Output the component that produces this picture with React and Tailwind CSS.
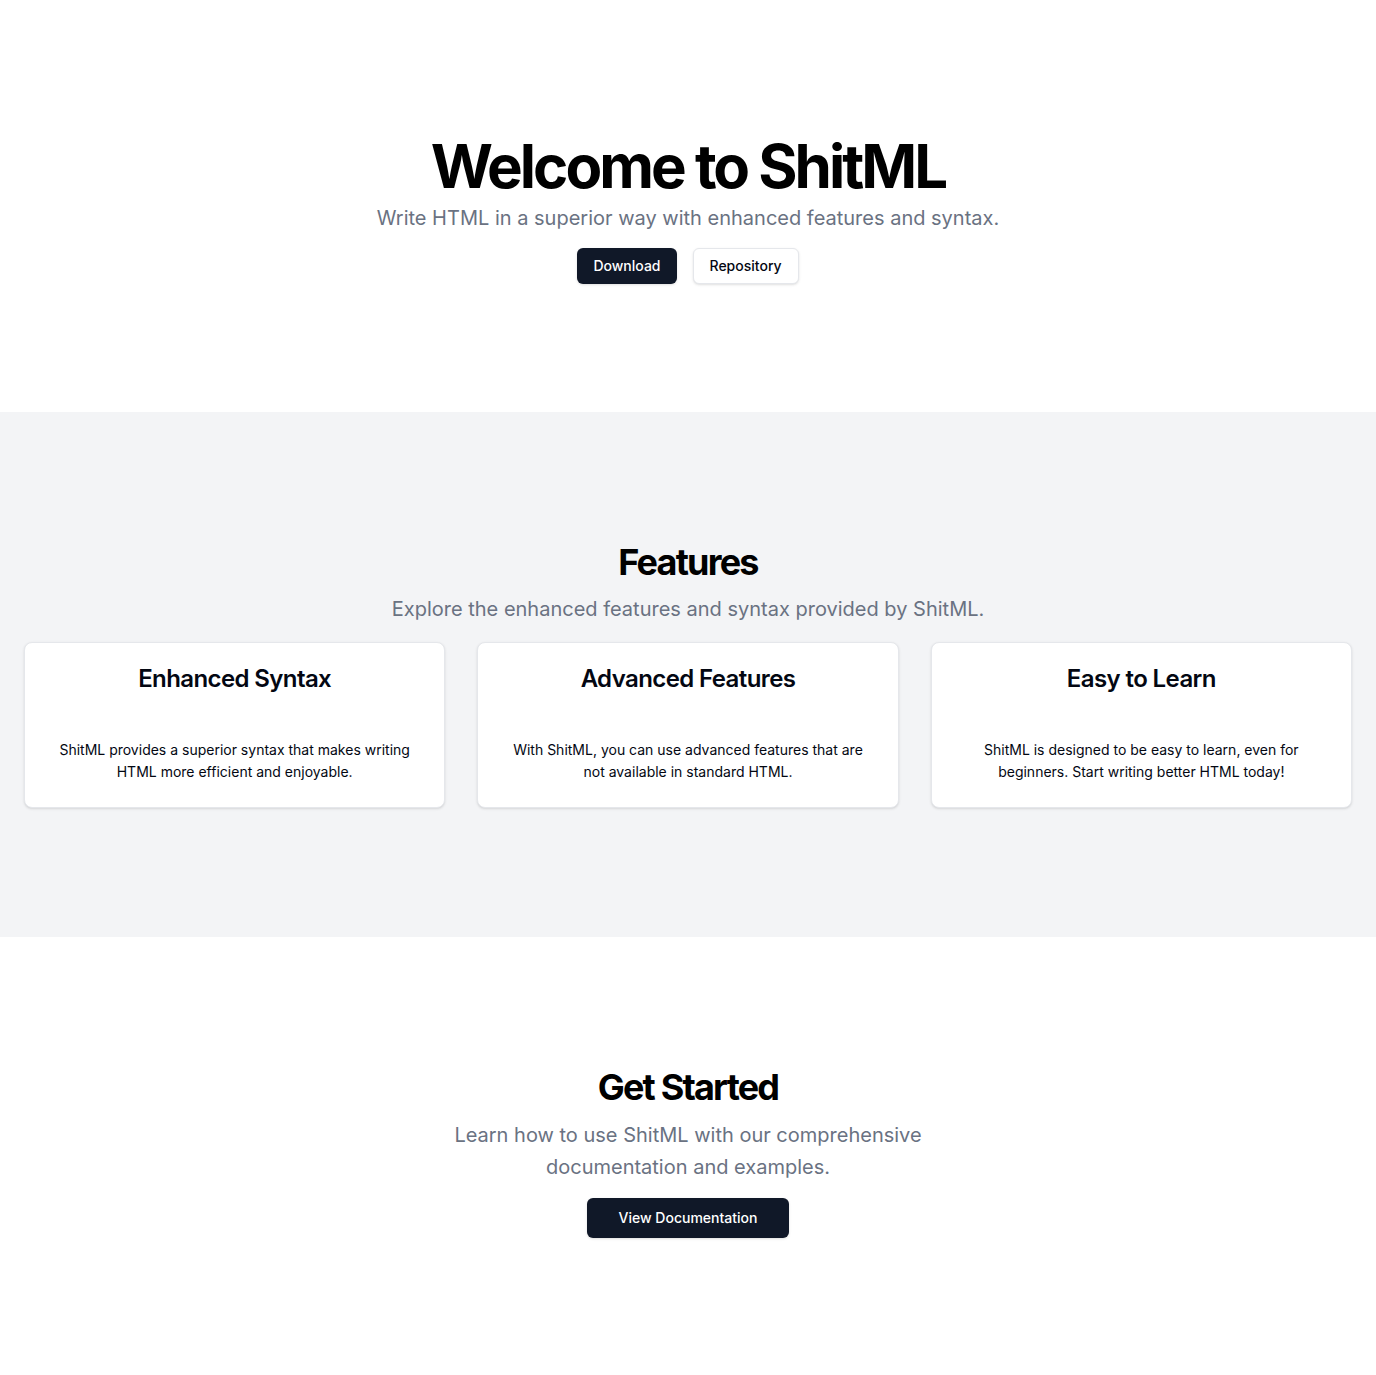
import React from "react";

const features = [
  {
    title: "Enhanced Syntax",
    text: "ShitML provides a superior syntax that makes writing HTML more efficient and enjoyable.",
  },
  {
    title: "Advanced Features",
    text: "With ShitML, you can use advanced features that are not available in standard HTML.",
  },
  {
    title: "Easy to Learn",
    text: "ShitML is designed to be easy to learn, even for beginners. Start writing better HTML today!",
  },
];

const App = () => {
  return (
    <div className="min-h-screen bg-white text-gray-950 font-['Inter',sans-serif]">
      {/* Hero */}
      <section className="w-full py-32">
        <div className="px-6 flex flex-col items-center text-center">
          <h1 className="mt-2 text-6xl leading-none font-bold tracking-tighter text-black">
            Welcome to ShitML
          </h1>
          <p className="mt-2 max-w-[700px] text-xl text-gray-500">
            Write HTML in a superior way with enhanced features and syntax.
          </p>
          <div className="mt-4 flex gap-4">
            <button className="h-9 px-4 rounded-md bg-gray-900 text-white text-sm font-medium shadow">
              Download
            </button>
            <button className="h-9 px-4 rounded-md border border-gray-200 bg-white text-sm font-medium shadow-sm">
              Repository
            </button>
          </div>
        </div>
      </section>

      {/* Features */}
      <section className="w-full pt-32 pb-[129px] bg-gray-100">
        <div className="px-6 flex flex-col items-center text-center">
          <h2 className="text-4xl leading-[44px] font-bold tracking-tighter text-black">
            Features
          </h2>
          <p className="mt-[9px] max-w-[900px] text-xl leading-relaxed text-gray-500">
            Explore the enhanced features and syntax provided by ShitML.
          </p>
          <div className="mt-4 w-full grid grid-cols-3 gap-8">
            {features.map((f) => (
              <div
                key={f.title}
                className="rounded-lg border border-gray-200 bg-white shadow-sm"
              >
                <div className="p-6 pb-0">
                  <h3 className="text-2xl leading-none font-semibold tracking-tight">
                    {f.title}
                  </h3>
                </div>
                <div className="px-6 pt-[48px] pb-6">
                  <p className="mx-auto max-w-[360px] text-sm leading-[22px]">
                    {f.text}
                  </p>
                </div>
              </div>
            ))}
          </div>
        </div>
      </section>

      {/* Get Started */}
      <section className="w-full py-32">
        <div className="px-6 flex flex-col items-center text-center">
          <h2 className="text-4xl leading-[44px] font-bold tracking-tighter text-black">
            Get Started
          </h2>
          <p className="mt-[10px] max-w-[600px] text-xl leading-relaxed text-gray-500">
            Learn how to use ShitML with our comprehensive documentation and
            examples.
          </p>
          <button className="mt-[14px] h-10 px-8 rounded-md bg-gray-900 text-white text-sm font-medium shadow">
            View Documentation
          </button>
        </div>
      </section>
    </div>
  );
};

export default App;
